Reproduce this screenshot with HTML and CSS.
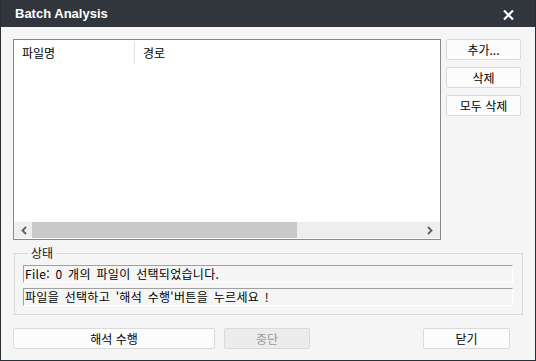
FILE: index.html
```html
<!DOCTYPE html>
<html lang="ko">
<head>
  <meta charset="UTF-8">
  <title>Batch Analysis</title>
  <link rel="stylesheet" href="styles.css">
</head>
<body>
  <div class="window">
    <div class="titlebar">
      <span class="title">Batch Analysis</span>
      <svg class="close" width="11" height="10" viewBox="0 0 11 10">
        <path d="M1 0.5 L10 9.5 M10 0.5 L1 9.5" stroke="#fff" stroke-width="2.2" fill="none"/>
      </svg>
    </div>

    <div class="content">
      <div class="top-row">
        <div class="list">
          <div class="list-header">
            <div class="col col-name">파일명</div>
            <div class="col col-path">경로</div>
          </div>
          <div class="list-body"></div>
          <div class="hscroll">
            <svg class="arrow" width="8" height="9" viewBox="0 0 8 9">
              <path d="M6 1 L2.5 4.5 L6 8" stroke="#606060" stroke-width="1.8" fill="none"/>
            </svg>
            <div class="track"><div class="thumb"></div></div>
            <svg class="arrow" width="8" height="9" viewBox="0 0 8 9">
              <path d="M2 1 L5.5 4.5 L2 8" stroke="#606060" stroke-width="1.8" fill="none"/>
            </svg>
          </div>
        </div>
        <div class="side-buttons">
          <button class="btn">추가...</button>
          <button class="btn">삭제</button>
          <button class="btn">모두 삭제</button>
        </div>
      </div>

      <fieldset class="status">
        <legend>상태</legend>
        <div class="field">File: 0 개의 파일이 선택되었습니다.</div>
        <div class="field">파일을 선택하고 '해석 수행'버튼을 누르세요 !</div>
      </fieldset>

      <div class="bottom-row">
        <button class="btn btn-run">해석 수행</button>
        <button class="btn btn-stop" disabled>중단</button>
        <button class="btn btn-close">닫기</button>
      </div>
    </div>
  </div>
</body>
</html>
```

FILE: styles.css
```css
body {
  margin: 0;
  font-family: "Noto Sans CJK KR", "Liberation Sans", sans-serif;
  font-size: 12px;
  color: #000;
}
.window {
  width: 536px;
  height: 361px;
  box-sizing: border-box;
  border: 1px solid #2b2f35;
  border-top: none;
  background-color: #f5f5f5;
  display: flex;
  flex-direction: column;
}
.titlebar {
  height: 27px;
  background-color: #31363d;
  display: flex;
  align-items: center;
  justify-content: space-between;
  padding: 0 21px 0 14px;
  flex-shrink: 0;
}
.title {
  font-family: "Liberation Sans", Arial, sans-serif;
  font-weight: bold;
  font-size: 13px;
  color: #fff;
}
.close {
  margin-top: 2px;
}
.content {
  padding: 12px 13px 0 12px;
  display: flex;
  flex-direction: column;
}
.top-row {
  display: flex;
  gap: 5px;
}
.list {
  width: 428px;
  height: 201px;
  box-sizing: border-box;
  border: 1px solid #88888f;
  background-color: #fff;
  display: flex;
  flex-direction: column;
}
.list-header {
  display: flex;
  height: 23px;
  margin-top: 1px;
}
.col {
  line-height: 23px;
  padding-left: 8px;
}
.col-name {
  width: 112px;
  border-right: 1px solid #e2e2e2;
}
.col-path {
  padding-left: 8px;
}
.list-body {
  flex: 1;
}
.hscroll {
  height: 16px;
  margin-bottom: 1px;
  background-color: #eeeeee;
  display: flex;
  align-items: center;
}
.arrow {
  flex-shrink: 0;
  margin: 0 6px;
}
.track {
  flex: 1;
  height: 100%;
  margin: 0 -1px 0 -2px;
}
.thumb {
  width: 265px;
  height: 100%;
  background-color: #c9c9c9;
}
.side-buttons {
  display: flex;
  flex-direction: column;
  gap: 7px;
}
.btn {
  font-family: "Noto Sans CJK KR", "Liberation Sans", sans-serif;
  font-size: 12px;
  color: #000;
  background-color: #fcfcfc;
  border: 1px solid #dadada;
  border-radius: 2px;
  height: 21px;
  padding: 0;
  line-height: 18px;
}
.side-buttons .btn {
  width: 75px;
}
.status {
  margin: 6px 0 0 1px;
  width: 509px;
  box-sizing: border-box;
  border: 1px solid #d8d8d8;
  padding: 5px 9px 8px 8px;
  display: flex;
  flex-direction: column;
  gap: 5px;
}
.status legend {
  padding: 0 3px;
  margin-left: 5px;
  line-height: 14px;
  color: #111;
}
.field {
  height: 18px;
  box-sizing: border-box;
  border-top: 1px solid #a0a0a0;
  border-left: 1px solid #a0a0a0;
  border-right: 1px solid #fff;
  border-bottom: 1px solid #fff;
  line-height: 16px;
  padding-left: 1px;
  white-space: nowrap;
  letter-spacing: 0.3px;
  word-spacing: 2px;
}
.bottom-row {
  display: flex;
  margin-top: 13px;
}
.btn-run {
  width: 202px;
}
.btn-stop {
  width: 86px;
  margin-left: 9px;
  background-color: #ececec;
  color: #9a9a9a;
}
.btn-close {
  width: 87px;
  margin-left: auto;
  margin-right: 12px;
}
```
